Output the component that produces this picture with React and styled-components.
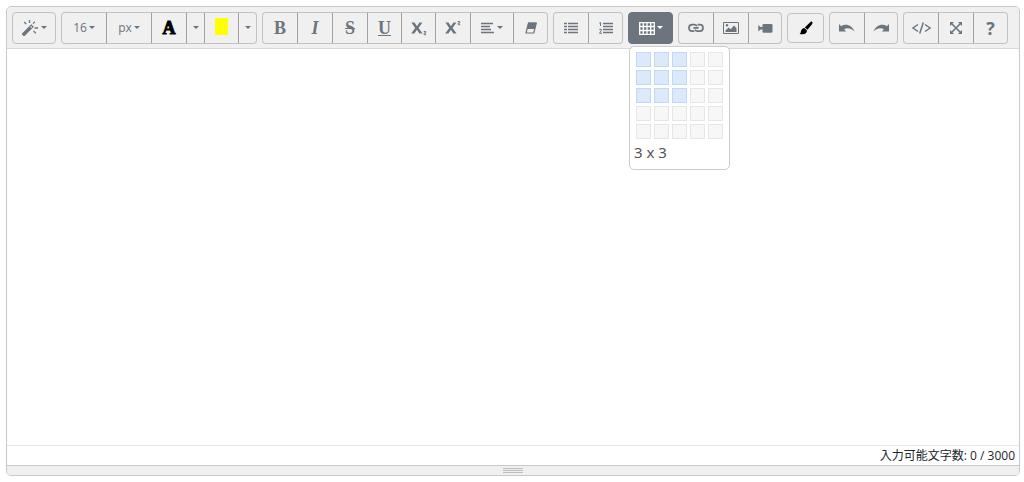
import React, { useState } from "react";
import styled, { createGlobalStyle, css } from "styled-components";

const GlobalStyle = createGlobalStyle`
  *, *::before, *::after { box-sizing: border-box; }
  body {
    margin: 0;
    padding: 6px 4px 6px 6px;
    background: #fff;
    color: #212529;
    font-family: "Open Sans", "Noto Sans CJK JP", sans-serif;
    font-size: 12px;
  }
  button, textarea { font: inherit; }
`;

const Editor = styled.section`
  display: flex;
  flex-direction: column;
  border: 1px solid #c8c8c8;
  border-radius: 5px;
  background: #fff;
`;

const Toolbar = styled.div`
  display: flex;
  flex-wrap: wrap;
  align-items: center;
  gap: 5px;
  padding: 5px 5px 4px;
  background: #f0f0f0;
  border-bottom: 1px solid #d8d8d8;
  border-radius: 4px 4px 0 0;
`;

const Group = styled.div`
  position: relative;
  display: flex;
`;

const ToolButton = styled.button`
  display: flex;
  align-items: center;
  justify-content: center;
  gap: 2px;
  width: ${(p) => p.$width || 35}px;
  height: ${(p) => (p.$short ? 30 : 32)}px;
  padding: 0;
  line-height: 16px;
  color: ${(p) => (p.$dark ? "#000" : "#6c757d")};
  background: #f0f0f0;
  border: 1px solid #c2c2c2;
  border-left-color: #a2a2a2;
  border-right-width: 0;
  cursor: pointer;

  &:first-child {
    border-left-color: #c2c2c2;
    border-radius: 4px 0 0 4px;
  }
  &:last-of-type {
    border-right-width: 1px;
    border-radius: 0 4px 4px 0;
  }
  &:only-of-type {
    border-radius: 4px;
  }

  ${(p) =>
    p.$active &&
    css`
      && {
        color: #fff;
        background: #6c757d;
        border-color: #6c757d;
      }
    `}
`;

const CaretMark = styled.svg`
  display: block;
  flex: none;
  margin-bottom: 2px;
  fill: currentColor;
`;

const Caret = () => (
  <CaretMark width="6" height="3" viewBox="0 0 6 3" aria-hidden="true">
    <path d="M0 0h6L3 3z" />
  </CaretMark>
);

const Glyph = styled.span`
  font-family: "Liberation Serif", serif;
  font-size: 18px;
  line-height: 20px;
  font-weight: 700;
  -webkit-text-stroke: ${(p) => (p.$heavy ? "1px currentColor" : "0")};
  font-style: ${(p) => (p.$italic ? "italic" : "normal")};
  text-decoration: ${(p) => p.$line || "none"};
  text-decoration-thickness: 1px;
  text-underline-offset: 1px;
`;

const HelpGlyph = styled.span`
  font-family: "Open Sans", sans-serif;
  font-size: 18px;
  font-weight: 700;
  line-height: 20px;
`;

const Swatch = styled.span`
  width: 13px;
  height: 17px;
  margin-bottom: 4px;
  background: #ff0;
`;

const TableMenu = styled.div`
  position: absolute;
  z-index: 2;
  top: 34px;
  left: 1px;
  padding: 5px 6px 7px;
  background: #fff;
  border: 1px solid #ccc;
  border-radius: 5px;
`;

const CellGrid = styled.div`
  display: grid;
  grid-template-columns: repeat(5, 15px);
  gap: 3px;
`;

const Cell = styled.button`
  width: 15px;
  height: 15px;
  padding: 0;
  background: ${(p) => (p.$on ? "#dce9fb" : "#f7f7f7")};
  border: 1px solid ${(p) => (p.$on ? "#bfd8fb" : "#e6e6e6")};
`;

const Dimension = styled.output`
  display: block;
  margin: 3px 0 0 -2px;
  color: #50555a;
  font-family: "Noto Sans", sans-serif;
  font-size: 15px;
  line-height: 20px;
`;

const EditingArea = styled.textarea`
  display: block;
  width: 100%;
  height: 396px;
  padding: 10px;
  border: 0;
  outline: 0;
  resize: none;
  background: #fff;
`;

const CharCount = styled.div`
  padding: 0 4px;
  border-top: 1px solid #e6e6e6;
  line-height: 19px;
  text-align: right;
`;

const ResizeBar = styled.div`
  display: flex;
  flex-direction: column;
  align-items: center;
  gap: 1px;
  padding: 2px 0;
  background: #f0f0f0;
  border-top: 1px solid #c8c8c8;
  border-radius: 0 0 4px 4px;
  cursor: ns-resize;
`;

const GripLine = styled.span`
  width: 20px;
  height: 1px;
  background: #bcbcbc;
`;

const Svg = styled.svg`
  display: block;
  flex: none;
  fill: none;
  stroke: currentColor;
`;

const Icon = ({ w = 16, h = 16, children }) => (
  <Svg width={w} height={h} viewBox={`0 0 ${w} ${h}`} aria-hidden="true">
    {children}
  </Svg>
);

const MagicIcon = () => (
  <Icon w={17}>
    <path d="M.8 15.2 10.5 5.5" strokeWidth="3.6" />
    <path d="m8.6 7.4 1-1" stroke="#f0f0f0" strokeWidth="1.4" />
    <path d="M7.5 0v3M2.2 2l2 2M12.8 1.8 11 3.6M12.5 8H16M11.5 11l2.4 2.4" strokeWidth="1.3" />
  </Icon>
);

const SubscriptIcon = () => (
  <Icon>
    <path d="M.4 2.5h3.1l2.5 3.8 2.4-3.8h3L7.6 8l4 5.5H8.4L5.9 9.7l-2.5 3.8H.2l4-5.6z" fill="currentColor" stroke="none" />
    <path d="M12.7 11.5h2v1.6h-1.5v1.6h2" strokeWidth="1" />
  </Icon>
);

const SuperscriptIcon = () => (
  <Icon>
    <path d="M.4 2.5h3.1l2.5 3.8 2.4-3.8h3L7.6 8l4 5.5H8.4L5.9 9.7l-2.5 3.8H.2l4-5.6z" fill="currentColor" stroke="none" />
    <path d="M12.7 1.5h2v1.6h-1.5v1.6h2" strokeWidth="1" />
  </Icon>
);

const AlignIcon = () => (
  <Icon w={14} h={12}>
    <path d="M0 1.5h12M0 4.5h9M0 7.5h10M0 10.5h13" strokeWidth="1.5" />
  </Icon>
);

const EraserIcon = () => (
  <Icon w={12} h={12}>
    <path d="M3.6 1h7.7L8.7 11H1z" strokeWidth="1.2" strokeLinejoin="round" />
    <path d="M3.3.5h8.3L10 7H1.6z" fill="currentColor" stroke="none" />
  </Icon>
);

const ListIcon = () => (
  <Icon w={14} h={12}>
    <path d="M0 1.5h3M0 4.5h3M0 7.5h3M0 10.5h3M4 1.5h10M4 4.5h10M4 7.5h10M4 10.5h10" strokeWidth="1.7" />
  </Icon>
);

const OrderedListIcon = () => (
  <Icon w={14} h={12}>
    <path d="M4 1.5h10M4 4.5h10M4 7.5h10M4 10.5h10" strokeWidth="1.7" />
    <path d="M.3 1.2 1.5.5V4M.2 7.3h2v1.6L.5 11.3h2.4" strokeWidth="1" />
  </Icon>
);

const TableIcon = () => (
  <Icon w={16} h={13}>
    <path d="M.7.7h14.6v11.6H.7zM0 4.5h16M0 8.5h16M4.3 0v13M8 0v13M11.7 0v13" strokeWidth="1.3" />
  </Icon>
);

const LinkIcon = () => (
  <Icon w={16} h={10}>
    <path d="M9 3.2C8.4 2 7.4 1.7 6.3 1.7H4.2a3.2 3.2 0 0 0 0 6.4h2.1M7 6.7c.6 1.1 1.6 1.4 2.7 1.4h2.1a3.2 3.2 0 0 0 0-6.4H9.7M5.3 4.9h5.4" strokeWidth="1.7" />
  </Icon>
);

const PictureIcon = () => (
  <Icon w={16} h={12}>
    <path d="M.5.5h15v11H.5z" />
    <path d="M2.5 10V8.5l3.2-3 2 1.8L11 3.5l2.5 2.7V10z" fill="currentColor" stroke="none" />
    <circle cx="4" cy="3.2" r="1.2" fill="currentColor" stroke="none" />
  </Icon>
);

const VideoIcon = () => (
  <Icon w={15} h={9}>
    <rect x="4.5" y="0" width="10" height="8.7" rx="1.2" fill="currentColor" stroke="none" />
    <path d="M.3 1 2.5 3h2.3v2.5H2.5L.3 7.5z" fill="currentColor" stroke="none" />
  </Icon>
);

const BrushIcon = () => (
  <Icon w={14} h={14}>
    <path d="M13 .8c.9.6.5 1.8-.2 2.7L8.5 8.7 5.8 6.5 10.9 1.4c.6-.6 1.4-1.1 2.1-.6ZM5.2 7l2.7 2.3c.2 3.3-2.6 4.7-7.3 3.6 1.5-.5.9-1.9 1.6-3.4C2.8 8.2 3.9 7.1 5.2 7Z" fill="currentColor" stroke="none" />
  </Icon>
);

const UndoIcon = () => (
  <Icon w={16} h={10}>
    <path d="M0 1v7.5h7.2L5 6.3c3-1.8 6.7-1.3 10.6 2.2C13.1 2.7 7.2-.3 2.2 3.2z" fill="currentColor" stroke="none" />
  </Icon>
);

const RedoIcon = () => (
  <Icon w={16} h={10}>
    <path d="M16 1v7.5H8.8L11 6.3C8 4.5 4.3 5 .4 8.5 2.9 2.7 8.8-.3 13.8 3.2z" fill="currentColor" stroke="none" />
  </Icon>
);

const CodeIcon = () => (
  <Icon w={19} h={12}>
    <path d="M6 2.5.9 6 6 9.5M13 2.5 18.1 6 13 9.5M11.3.5l-3.6 11" strokeWidth="1.5" />
  </Icon>
);

const FullscreenIcon = () => (
  <Icon w={12} h={12}>
    <path d="m1.5 1.5 9 9M10.5 1.5l-9 9" strokeWidth="1.6" />
    <path d="M0 0h4L0 4zM12 0v4L8 0zM0 12V8l4 4zM12 12H8l4-4z" fill="currentColor" stroke="none" />
  </Icon>
);

const Tool = ({ label, width, caret, children, ...rest }) => (
  <ToolButton type="button" aria-label={label} $width={width} {...rest}>
    {children}
    {caret && <Caret />}
  </ToolButton>
);

const SIZE = 5;

export default function App() {
  const [dim, setDim] = useState({ cols: 3, rows: 3 });
  const cells = Array.from({ length: SIZE * SIZE }, (_, i) => ({
    col: (i % SIZE) + 1,
    row: Math.floor(i / SIZE) + 1,
  }));

  return (
    <>
      <GlobalStyle />
      <Editor>
        <Toolbar role="toolbar">
          <Group>
            <Tool label="Style" width={44} caret><MagicIcon /></Tool>
          </Group>
          <Group>
            <Tool label="Font size" width={45} caret>16</Tool>
            <Tool label="Font size unit" width={45} caret>px</Tool>
            <Tool label="Text color" $dark><Glyph $heavy>A</Glyph></Tool>
            <Tool label="More text colors" width={18} caret />
            <Tool label="Highlight" width={34}><Swatch /></Tool>
            <Tool label="More highlight colors" width={19} caret />
          </Group>
          <Group>
            <Tool label="Bold"><Glyph>B</Glyph></Tool>
            <Tool label="Italic"><Glyph $italic>I</Glyph></Tool>
            <Tool label="Strikethrough"><Glyph $line="line-through">S</Glyph></Tool>
            <Tool label="Underline" width={34}><Glyph $line="underline">U</Glyph></Tool>
            <Tool label="Subscript" width={34}><SubscriptIcon /></Tool>
            <Tool label="Superscript"><SuperscriptIcon /></Tool>
            <Tool label="Paragraph" width={43} caret><AlignIcon /></Tool>
            <Tool label="Clear formatting"><EraserIcon /></Tool>
          </Group>
          <Group>
            <Tool label="Unordered list"><ListIcon /></Tool>
            <Tool label="Ordered list"><OrderedListIcon /></Tool>
          </Group>
          <Group>
            <Tool label="Table" width={45} caret $active aria-expanded="true"><TableIcon /></Tool>
            <TableMenu>
              <CellGrid>
                {cells.map(({ col, row }) => (
                  <Cell
                    key={`${col}-${row}`}
                    type="button"
                    aria-label={`${col} x ${row}`}
                    $on={col <= dim.cols && row <= dim.rows}
                    onMouseEnter={() => setDim({ cols: col, rows: row })}
                  />
                ))}
              </CellGrid>
              <Dimension>{`${dim.cols} x ${dim.rows}`}</Dimension>
            </TableMenu>
          </Group>
          <Group>
            <Tool label="Link"><LinkIcon /></Tool>
            <Tool label="Picture"><PictureIcon /></Tool>
            <Tool label="Video" width={34}><VideoIcon /></Tool>
          </Group>
          <Group>
            <Tool label="Brush" width={37} $dark $short><BrushIcon /></Tool>
          </Group>
          <Group>
            <Tool label="Undo"><UndoIcon /></Tool>
            <Tool label="Redo" width={34}><RedoIcon /></Tool>
          </Group>
          <Group>
            <Tool label="Code view"><CodeIcon /></Tool>
            <Tool label="Full screen"><FullscreenIcon /></Tool>
            <Tool label="Help"><HelpGlyph>?</HelpGlyph></Tool>
          </Group>
        </Toolbar>
        <EditingArea aria-label="Content" />
        <CharCount>入力可能文字数: 0 / 3000</CharCount>
        <ResizeBar role="separator" aria-label="Resize">
          <GripLine />
          <GripLine />
          <GripLine />
        </ResizeBar>
      </Editor>
    </>
  );
}
